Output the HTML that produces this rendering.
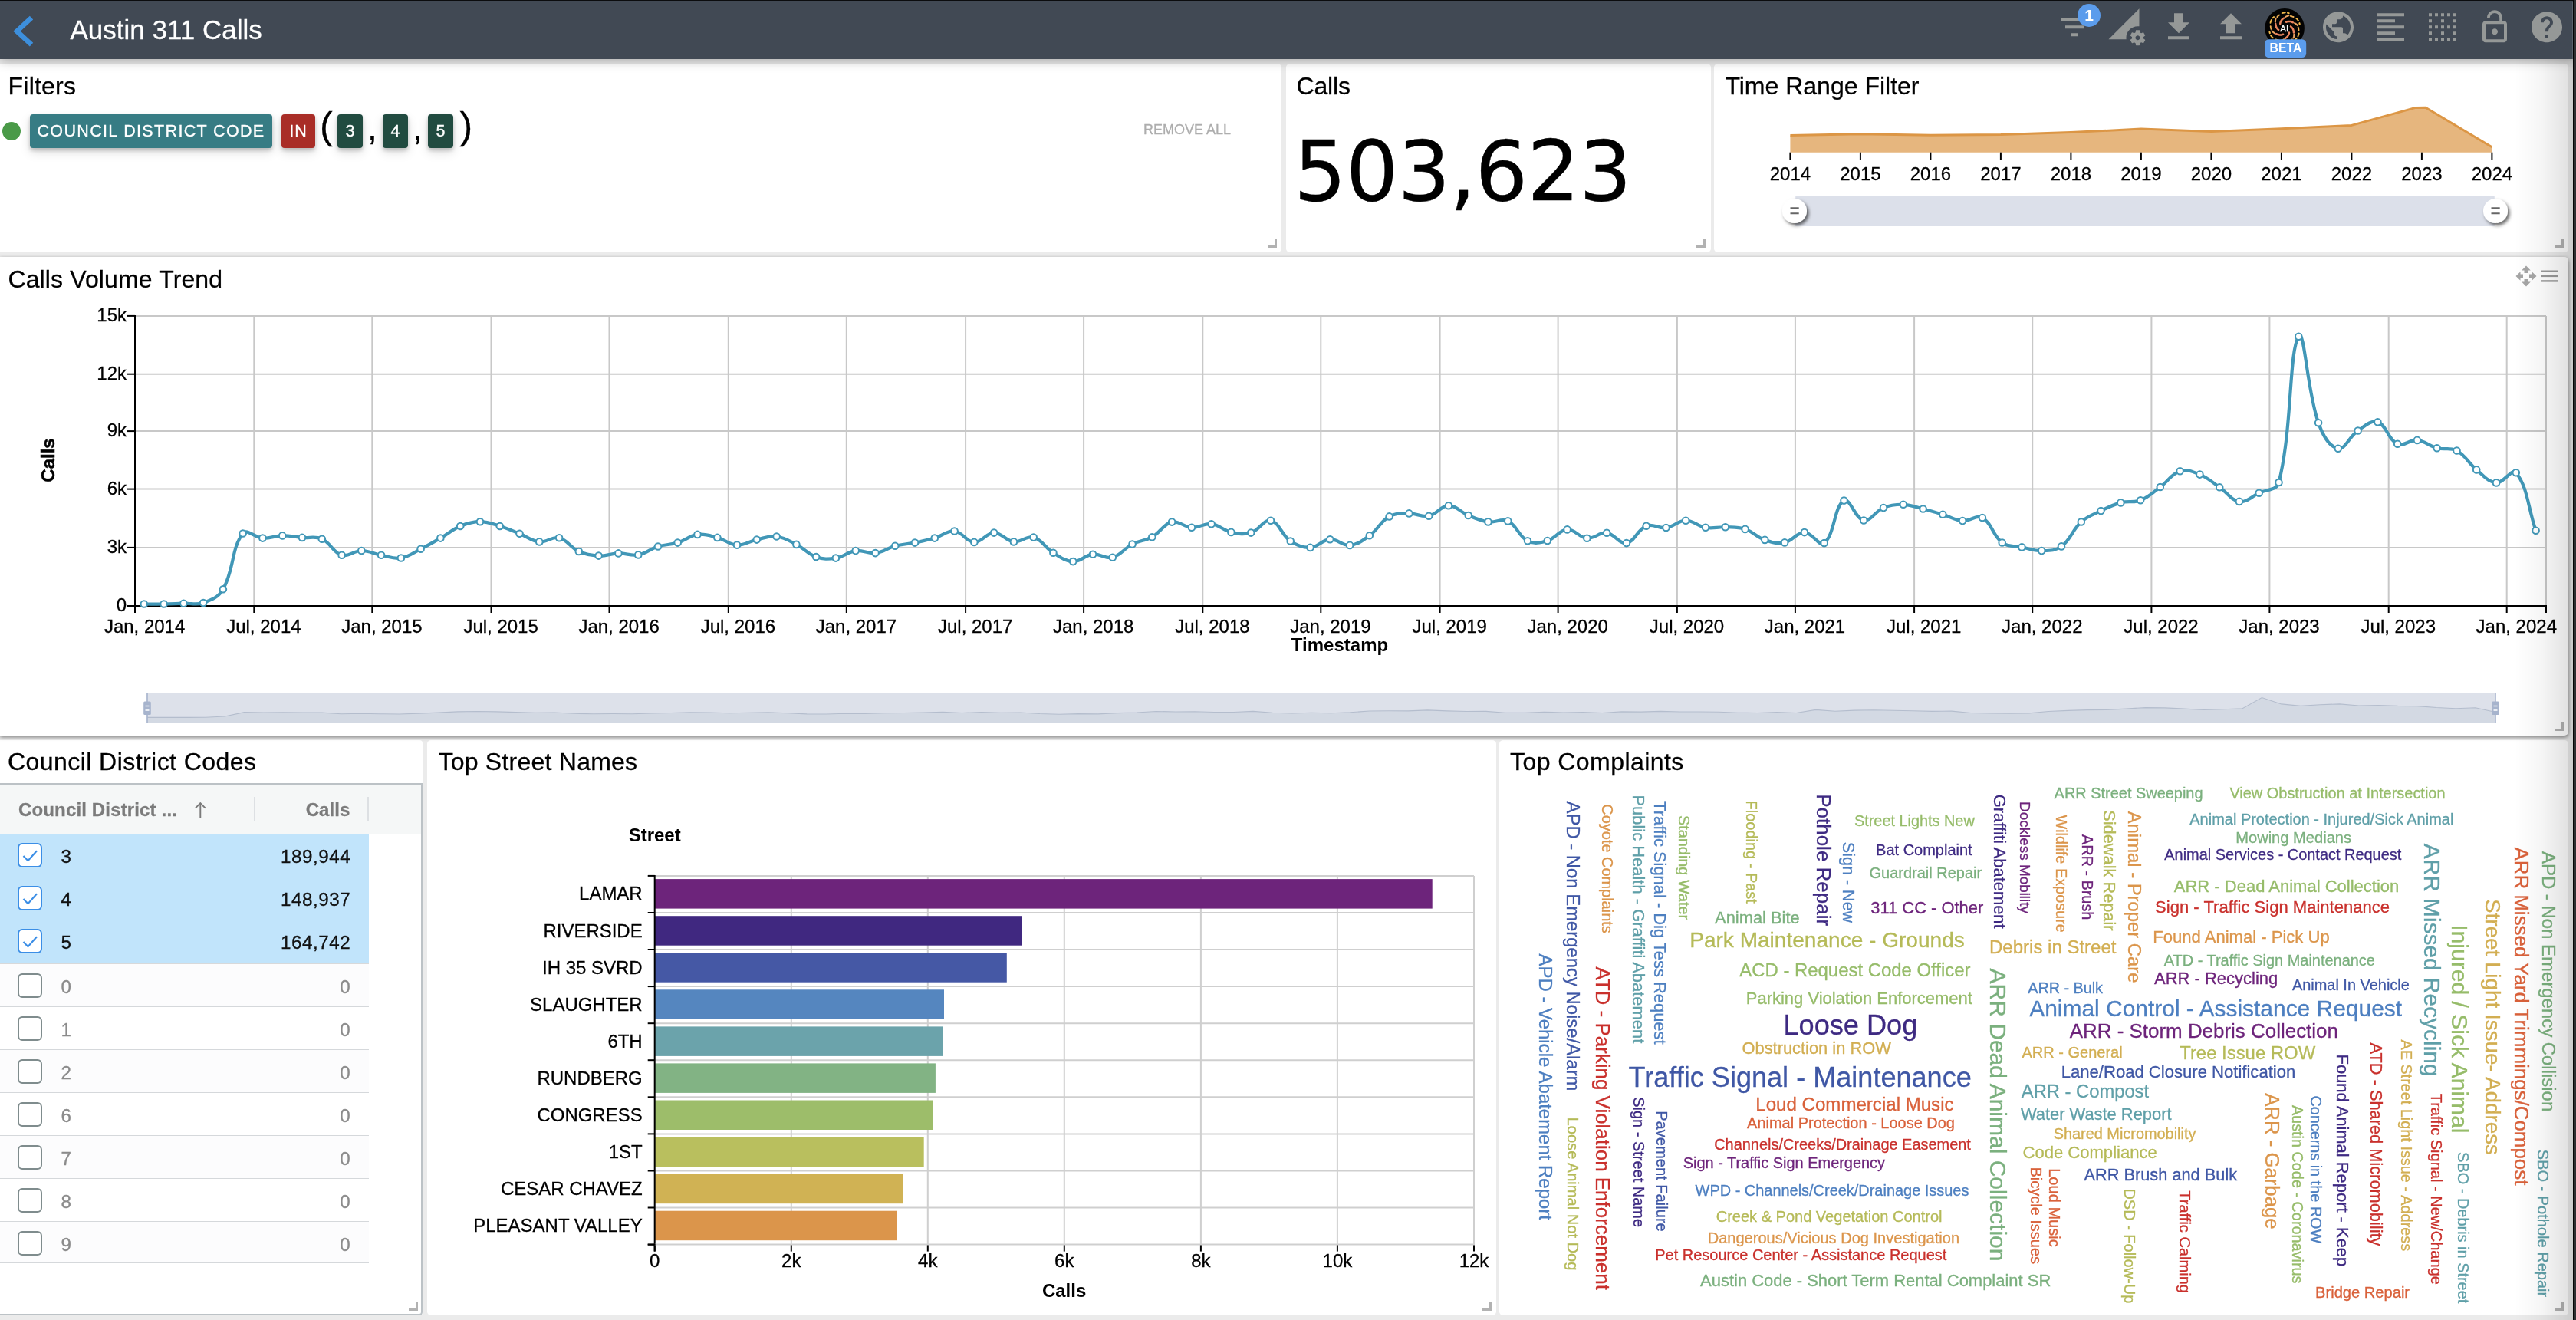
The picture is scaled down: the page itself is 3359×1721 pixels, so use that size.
<!DOCTYPE html><html><head><meta charset="utf-8"><title>Austin 311 Calls</title><style>
*{box-sizing:border-box;margin:0;padding:0}
html,body{width:3359px;height:1721px;overflow:hidden;background:#ebebeb;font-family:"Liberation Sans",sans-serif;}
body{position:relative;-webkit-text-stroke:.3px}
#root{position:absolute;left:0;top:0;width:3359px;height:1721px;will-change:transform}
.abs{position:absolute}
.panel{position:absolute;background:#fff;border-radius:5px;overflow:hidden}
.ptitle{position:absolute;left:12px;font-size:32px;line-height:40px;color:#000;white-space:nowrap}
.rh{position:absolute;width:12px;height:12px;border-right:3.4px solid #b2b2b2;border-bottom:3.4px solid #b2b2b2}
.chip{position:absolute;top:66px;height:44px;border-radius:4px;color:#fff;font-size:21.5px;line-height:44px;text-align:center;box-shadow:0 3px 5px rgba(0,0,0,.2),0 6px 14px rgba(0,0,0,.13);white-space:nowrap}
svg{position:absolute;left:0;top:0;overflow:visible}
svg text{font-family:"Liberation Sans",sans-serif}
</style></head><body><div id="root">
<div class="abs" style="left:0;top:0;width:3359px;height:77px;background:#414954;box-shadow:0 2px 14px rgba(0,0,0,.3);z-index:5"></div>
<div class="abs" style="left:0;top:0;width:3359px;height:1.3px;background:#0b0c0e;z-index:6"></div>
<svg class="abs" style="left:0;top:0;z-index:7" width="3359" height="80" viewBox="0 0 3359 80"><path d="M41 23.2 L22 40.700 L41 58.2" fill="none" stroke="#3d8fdc" stroke-width="6.5" stroke-linejoin="miter"/></svg>
<div class="abs" style="left:91.5px;top:17.4px;z-index:7;color:#fff;font-size:35px;line-height:44px;white-space:nowrap">Austin 311 Calls</div>
<div class="panel" style="left:0;top:83px;width:1671px;height:246px;border-radius:0 5px 5px 0">
<div class="ptitle" style="top:9px;left:10.6px;letter-spacing:.2px">Filters</div>
<div class="abs" style="left:3px;top:76px;width:24px;height:24px;border-radius:50%;background:#4a9a48"></div>
<div class="chip" style="left:39px;width:316px;background:#377c84;letter-spacing:1.35px">COUNCIL DISTRICT CODE</div>
<div class="chip" style="left:367px;width:44px;background:#a92d27;letter-spacing:1px">IN</div>
<div class="abs" style="left:417px;top:50.5px;font-size:50px;line-height:60px;color:#000">(</div>
<div class="chip" style="left:440px;width:33px;background:#214b40">3</div>
<div class="abs" style="left:479px;top:53px;font-size:46px;line-height:60px;color:#000">,</div>
<div class="chip" style="left:499px;width:33px;background:#214b40">4</div>
<div class="abs" style="left:538px;top:53px;font-size:46px;line-height:60px;color:#000">,</div>
<div class="chip" style="left:558px;width:33px;background:#214b40">5</div>
<div class="abs" style="left:599.5px;top:50.5px;font-size:50px;line-height:60px;color:#000">)</div>
<div class="abs" style="left:1491px;top:74px;font-size:18px;line-height:24px;color:#adadad;white-space:nowrap">REMOVE ALL</div>
<div class="rh" style="left:1653px;top:228px"></div>
</div>
<div class="panel" style="left:1677px;top:83px;width:554px;height:246px">
<div class="ptitle" style="top:9px;left:13.4px;letter-spacing:-.1px">Calls</div>
<div class="abs" style="left:10px;top:76px;font-family:'DejaVu Sans',sans-serif;font-size:108px;line-height:130px;color:#000;white-space:nowrap;letter-spacing:-1px">503,623</div>
<div class="rh" style="left:535px;top:228px"></div>
</div>
<div class="panel" style="left:2235px;top:83px;width:1114px;height:246px">
<div class="ptitle" style="top:9px;left:14.4px">Time Range Filter</div>
<svg width="1114" height="246" viewBox="2235 83 1114 246">
<polygon points="2334.4,198.7 2334.4,176.4 2425.9,174.7 2517.4,176.2 2608.9,175.6 2700.4,172.6 2791.9,168.1 2883.4,171.6 2974.9,167.8 3066.4,163.4 3149.9,140.4 3162.9,140.2 3249.4,191.8 3249.4,198.7" fill="#e6b67e"/>
<polyline points="2334.4,176.4 2425.9,174.7 2517.4,176.2 2608.9,175.6 2700.4,172.6 2791.9,168.1 2883.4,171.6 2974.9,167.8 3066.4,163.4 3149.9,140.4 3162.9,140.2 3249.4,191.8" fill="none" stroke="#dc9645" stroke-width="3" stroke-linejoin="round"/>
<line x1="2334.4" y1="198.7" x2="2334.4" y2="208.5" stroke="#000" stroke-width="2"/>
<text x="2334.4" y="234.7" font-size="24" text-anchor="middle" fill="#000" stroke="#000" stroke-width=".3">2014</text>
<line x1="2425.9" y1="198.7" x2="2425.9" y2="208.5" stroke="#000" stroke-width="2"/>
<text x="2425.9" y="234.7" font-size="24" text-anchor="middle" fill="#000" stroke="#000" stroke-width=".3">2015</text>
<line x1="2517.4" y1="198.7" x2="2517.4" y2="208.5" stroke="#000" stroke-width="2"/>
<text x="2517.4" y="234.7" font-size="24" text-anchor="middle" fill="#000" stroke="#000" stroke-width=".3">2016</text>
<line x1="2608.9" y1="198.7" x2="2608.9" y2="208.5" stroke="#000" stroke-width="2"/>
<text x="2608.9" y="234.7" font-size="24" text-anchor="middle" fill="#000" stroke="#000" stroke-width=".3">2017</text>
<line x1="2700.4" y1="198.7" x2="2700.4" y2="208.5" stroke="#000" stroke-width="2"/>
<text x="2700.4" y="234.7" font-size="24" text-anchor="middle" fill="#000" stroke="#000" stroke-width=".3">2018</text>
<line x1="2791.9" y1="198.7" x2="2791.9" y2="208.5" stroke="#000" stroke-width="2"/>
<text x="2791.9" y="234.7" font-size="24" text-anchor="middle" fill="#000" stroke="#000" stroke-width=".3">2019</text>
<line x1="2883.4" y1="198.7" x2="2883.4" y2="208.5" stroke="#000" stroke-width="2"/>
<text x="2883.4" y="234.7" font-size="24" text-anchor="middle" fill="#000" stroke="#000" stroke-width=".3">2020</text>
<line x1="2974.9" y1="198.7" x2="2974.9" y2="208.5" stroke="#000" stroke-width="2"/>
<text x="2974.9" y="234.7" font-size="24" text-anchor="middle" fill="#000" stroke="#000" stroke-width=".3">2021</text>
<line x1="3066.4" y1="198.7" x2="3066.4" y2="208.5" stroke="#000" stroke-width="2"/>
<text x="3066.4" y="234.7" font-size="24" text-anchor="middle" fill="#000" stroke="#000" stroke-width=".3">2022</text>
<line x1="3157.9" y1="198.7" x2="3157.9" y2="208.5" stroke="#000" stroke-width="2"/>
<text x="3157.9" y="234.7" font-size="24" text-anchor="middle" fill="#000" stroke="#000" stroke-width=".3">2023</text>
<line x1="3249.4" y1="198.7" x2="3249.4" y2="208.5" stroke="#000" stroke-width="2"/>
<text x="3249.4" y="234.7" font-size="24" text-anchor="middle" fill="#000" stroke="#000" stroke-width=".3">2024</text>
<rect x="2340" y="255" width="914" height="40" fill="#dce0ea"/>
<defs><filter id="hs" x="-50%" y="-50%" width="200%" height="200%"><feDropShadow dx="2.5" dy="3" stdDeviation="2.3" flood-color="#000" flood-opacity=".6"/></filter></defs>
<line x1="2340" y1="255" x2="2340" y2="297" stroke="#fff" stroke-width="2.5"/>
<circle cx="2340" cy="275" r="16" fill="#fff" filter="url(#hs)"/>
<path d="M2334.5 271.3h11.200M2334.5 278.3h11.200" stroke="#666" stroke-width="2"/>
<line x1="3254" y1="255" x2="3254" y2="297" stroke="#fff" stroke-width="2.5"/>
<circle cx="3254" cy="275" r="16" fill="#fff" filter="url(#hs)"/>
<path d="M3248.5 271.3h11.200M3248.5 278.3h11.200" stroke="#666" stroke-width="2"/>
</svg>
<div class="rh" style="left:1096px;top:228px"></div>
</div>
<div class="panel" style="left:0px;top:335px;width:3349px;height:624px;overflow:visible;border-radius:0 5px 5px 0;box-shadow:0 2px 5px rgba(0,0,0,.5);z-index:2">
<div class="ptitle" style="top:9.2px;left:10.4px;letter-spacing:.13px">Calls Volume Trend</div>
<svg width="3349" height="624" viewBox="0 335 3349 624">
<line x1="166.0" y1="790.0" x2="176.0" y2="790.0" stroke="#000" stroke-width="2"/>
<text x="165.0" y="797.0" font-size="24" text-anchor="end" fill="#000" stroke="#000" stroke-width=".3">0</text>
<line x1="176.0" y1="713.9" x2="3320.0" y2="713.9" stroke="#c8c8c8" stroke-width="2"/>
<line x1="166.0" y1="713.9" x2="176.0" y2="713.9" stroke="#000" stroke-width="2"/>
<text x="165.0" y="720.9" font-size="24" text-anchor="end" fill="#000" stroke="#000" stroke-width=".3">3k</text>
<line x1="176.0" y1="637.6" x2="3320.0" y2="637.6" stroke="#c8c8c8" stroke-width="2"/>
<line x1="166.0" y1="637.6" x2="176.0" y2="637.6" stroke="#000" stroke-width="2"/>
<text x="165.0" y="644.6" font-size="24" text-anchor="end" fill="#000" stroke="#000" stroke-width=".3">6k</text>
<line x1="176.0" y1="562.1" x2="3320.0" y2="562.1" stroke="#c8c8c8" stroke-width="2"/>
<line x1="166.0" y1="562.1" x2="176.0" y2="562.1" stroke="#000" stroke-width="2"/>
<text x="165.0" y="569.1" font-size="24" text-anchor="end" fill="#000" stroke="#000" stroke-width=".3">9k</text>
<line x1="176.0" y1="487.7" x2="3320.0" y2="487.7" stroke="#c8c8c8" stroke-width="2"/>
<line x1="166.0" y1="487.7" x2="176.0" y2="487.7" stroke="#000" stroke-width="2"/>
<text x="165.0" y="494.7" font-size="24" text-anchor="end" fill="#000" stroke="#000" stroke-width=".3">12k</text>
<line x1="176.0" y1="411.9" x2="3320.0" y2="411.9" stroke="#c8c8c8" stroke-width="2"/>
<line x1="166.0" y1="411.9" x2="176.0" y2="411.9" stroke="#000" stroke-width="2"/>
<text x="165.0" y="418.9" font-size="24" text-anchor="end" fill="#000" stroke="#000" stroke-width=".3">15k</text>
<line x1="176.0" y1="790.0" x2="176.0" y2="799.0" stroke="#000" stroke-width="2"/>
<text x="188.6" y="825" font-size="24" text-anchor="middle" fill="#000" stroke="#000" stroke-width=".3">Jan, 2014</text>
<line x1="331.3" y1="412.0" x2="331.3" y2="790.0" stroke="#c8c8c8" stroke-width="2"/>
<line x1="331.3" y1="790.0" x2="331.3" y2="799.0" stroke="#000" stroke-width="2"/>
<text x="343.9" y="825" font-size="24" text-anchor="middle" fill="#000" stroke="#000" stroke-width=".3">Jul, 2014</text>
<line x1="485.3" y1="412.0" x2="485.3" y2="790.0" stroke="#c8c8c8" stroke-width="2"/>
<line x1="485.3" y1="790.0" x2="485.3" y2="799.0" stroke="#000" stroke-width="2"/>
<text x="497.9" y="825" font-size="24" text-anchor="middle" fill="#000" stroke="#000" stroke-width=".3">Jan, 2015</text>
<line x1="640.5" y1="412.0" x2="640.5" y2="790.0" stroke="#c8c8c8" stroke-width="2"/>
<line x1="640.5" y1="790.0" x2="640.5" y2="799.0" stroke="#000" stroke-width="2"/>
<text x="653.1" y="825" font-size="24" text-anchor="middle" fill="#000" stroke="#000" stroke-width=".3">Jul, 2015</text>
<line x1="794.5" y1="412.0" x2="794.5" y2="790.0" stroke="#c8c8c8" stroke-width="2"/>
<line x1="794.5" y1="790.0" x2="794.5" y2="799.0" stroke="#000" stroke-width="2"/>
<text x="807.1" y="825" font-size="24" text-anchor="middle" fill="#000" stroke="#000" stroke-width=".3">Jan, 2016</text>
<line x1="949.8" y1="412.0" x2="949.8" y2="790.0" stroke="#c8c8c8" stroke-width="2"/>
<line x1="949.8" y1="790.0" x2="949.8" y2="799.0" stroke="#000" stroke-width="2"/>
<text x="962.4" y="825" font-size="24" text-anchor="middle" fill="#000" stroke="#000" stroke-width=".3">Jul, 2016</text>
<line x1="1103.8" y1="412.0" x2="1103.8" y2="790.0" stroke="#c8c8c8" stroke-width="2"/>
<line x1="1103.8" y1="790.0" x2="1103.8" y2="799.0" stroke="#000" stroke-width="2"/>
<text x="1116.4" y="825" font-size="24" text-anchor="middle" fill="#000" stroke="#000" stroke-width=".3">Jan, 2017</text>
<line x1="1259.1" y1="412.0" x2="1259.1" y2="790.0" stroke="#c8c8c8" stroke-width="2"/>
<line x1="1259.1" y1="790.0" x2="1259.1" y2="799.0" stroke="#000" stroke-width="2"/>
<text x="1271.7" y="825" font-size="24" text-anchor="middle" fill="#000" stroke="#000" stroke-width=".3">Jul, 2017</text>
<line x1="1413.1" y1="412.0" x2="1413.1" y2="790.0" stroke="#c8c8c8" stroke-width="2"/>
<line x1="1413.1" y1="790.0" x2="1413.1" y2="799.0" stroke="#000" stroke-width="2"/>
<text x="1425.7" y="825" font-size="24" text-anchor="middle" fill="#000" stroke="#000" stroke-width=".3">Jan, 2018</text>
<line x1="1568.3" y1="412.0" x2="1568.3" y2="790.0" stroke="#c8c8c8" stroke-width="2"/>
<line x1="1568.3" y1="790.0" x2="1568.3" y2="799.0" stroke="#000" stroke-width="2"/>
<text x="1580.9" y="825" font-size="24" text-anchor="middle" fill="#000" stroke="#000" stroke-width=".3">Jul, 2018</text>
<line x1="1722.3" y1="412.0" x2="1722.3" y2="790.0" stroke="#c8c8c8" stroke-width="2"/>
<line x1="1722.3" y1="790.0" x2="1722.3" y2="799.0" stroke="#000" stroke-width="2"/>
<text x="1734.9" y="825" font-size="24" text-anchor="middle" fill="#000" stroke="#000" stroke-width=".3">Jan, 2019</text>
<line x1="1877.6" y1="412.0" x2="1877.6" y2="790.0" stroke="#c8c8c8" stroke-width="2"/>
<line x1="1877.6" y1="790.0" x2="1877.6" y2="799.0" stroke="#000" stroke-width="2"/>
<text x="1890.2" y="825" font-size="24" text-anchor="middle" fill="#000" stroke="#000" stroke-width=".3">Jul, 2019</text>
<line x1="2031.6" y1="412.0" x2="2031.6" y2="790.0" stroke="#c8c8c8" stroke-width="2"/>
<line x1="2031.6" y1="790.0" x2="2031.6" y2="799.0" stroke="#000" stroke-width="2"/>
<text x="2044.2" y="825" font-size="24" text-anchor="middle" fill="#000" stroke="#000" stroke-width=".3">Jan, 2020</text>
<line x1="2186.9" y1="412.0" x2="2186.9" y2="790.0" stroke="#c8c8c8" stroke-width="2"/>
<line x1="2186.9" y1="790.0" x2="2186.9" y2="799.0" stroke="#000" stroke-width="2"/>
<text x="2199.5" y="825" font-size="24" text-anchor="middle" fill="#000" stroke="#000" stroke-width=".3">Jul, 2020</text>
<line x1="2340.9" y1="412.0" x2="2340.9" y2="790.0" stroke="#c8c8c8" stroke-width="2"/>
<line x1="2340.9" y1="790.0" x2="2340.9" y2="799.0" stroke="#000" stroke-width="2"/>
<text x="2353.5" y="825" font-size="24" text-anchor="middle" fill="#000" stroke="#000" stroke-width=".3">Jan, 2021</text>
<line x1="2496.1" y1="412.0" x2="2496.1" y2="790.0" stroke="#c8c8c8" stroke-width="2"/>
<line x1="2496.1" y1="790.0" x2="2496.1" y2="799.0" stroke="#000" stroke-width="2"/>
<text x="2508.7" y="825" font-size="24" text-anchor="middle" fill="#000" stroke="#000" stroke-width=".3">Jul, 2021</text>
<line x1="2650.2" y1="412.0" x2="2650.2" y2="790.0" stroke="#c8c8c8" stroke-width="2"/>
<line x1="2650.2" y1="790.0" x2="2650.2" y2="799.0" stroke="#000" stroke-width="2"/>
<text x="2662.8" y="825" font-size="24" text-anchor="middle" fill="#000" stroke="#000" stroke-width=".3">Jan, 2022</text>
<line x1="2805.4" y1="412.0" x2="2805.4" y2="790.0" stroke="#c8c8c8" stroke-width="2"/>
<line x1="2805.4" y1="790.0" x2="2805.4" y2="799.0" stroke="#000" stroke-width="2"/>
<text x="2818.0" y="825" font-size="24" text-anchor="middle" fill="#000" stroke="#000" stroke-width=".3">Jul, 2022</text>
<line x1="2959.4" y1="412.0" x2="2959.4" y2="790.0" stroke="#c8c8c8" stroke-width="2"/>
<line x1="2959.4" y1="790.0" x2="2959.4" y2="799.0" stroke="#000" stroke-width="2"/>
<text x="2972.0" y="825" font-size="24" text-anchor="middle" fill="#000" stroke="#000" stroke-width=".3">Jan, 2023</text>
<line x1="3114.7" y1="412.0" x2="3114.7" y2="790.0" stroke="#c8c8c8" stroke-width="2"/>
<line x1="3114.7" y1="790.0" x2="3114.7" y2="799.0" stroke="#000" stroke-width="2"/>
<text x="3127.3" y="825" font-size="24" text-anchor="middle" fill="#000" stroke="#000" stroke-width=".3">Jul, 2023</text>
<line x1="3268.7" y1="412.0" x2="3268.7" y2="790.0" stroke="#c8c8c8" stroke-width="2"/>
<line x1="3268.7" y1="790.0" x2="3268.7" y2="799.0" stroke="#000" stroke-width="2"/>
<text x="3281.3" y="825" font-size="24" text-anchor="middle" fill="#000" stroke="#000" stroke-width=".3">Jan, 2024</text>
<line x1="3320.0" y1="412.0" x2="3320.0" y2="790.0" stroke="#c8c8c8" stroke-width="2"/>
<line x1="3320.0" y1="790.0" x2="3320.0" y2="799.0" stroke="#000" stroke-width="2"/>
<line x1="176.0" y1="411.0" x2="176.0" y2="799.0" stroke="#000" stroke-width="2"/>
<line x1="167.0" y1="790.0" x2="3321.0" y2="790.0" stroke="#000" stroke-width="2"/>
<text transform="translate(71.3,600) rotate(-90)" font-size="24" font-weight="bold" text-anchor="middle" fill="#000" stroke="#000" stroke-width=".5">Calls</text>
<text x="1747" y="849" font-size="24" font-weight="bold" text-anchor="middle" fill="#000">Timestamp</text>
<path d="M187.8,787.5C198.1,787.5 203.3,787.7 213.6,787.5C223.9,787.3 229.0,787.0 239.4,786.7C249.7,786.4 255.8,789.3 265.1,786.0C276.4,781.9 284.9,778.7 290.9,768.2C305.6,742.5 301.3,715.3 316.7,695.5C321.9,688.7 332.0,701.0 342.4,701.6C352.7,702.2 357.9,698.5 368.2,698.4C378.5,698.3 383.7,700.0 394.0,700.9C404.3,701.8 410.8,698.7 419.8,702.7C431.4,707.9 434.1,720.4 445.6,723.8C454.7,726.5 461.0,718.0 471.3,718.0C481.6,718.0 486.7,721.9 497.1,723.8C507.3,725.7 513.0,729.0 522.9,727.5C533.6,725.8 538.5,720.9 548.6,715.8C559.2,710.5 564.2,707.5 574.4,701.6C584.9,695.6 589.2,690.6 600.2,686.0C609.8,682.0 615.7,680.2 626.0,680.2C636.3,680.2 641.7,682.9 651.8,686.0C662.3,689.2 667.3,691.7 677.5,695.8C687.9,699.9 692.7,705.3 703.3,706.4C713.3,707.5 719.7,699.0 729.1,701.3C740.3,704.0 743.7,713.9 754.8,719.0C764.3,723.3 770.2,724.1 780.6,724.6C790.9,725.1 796.1,721.6 806.4,721.4C816.7,721.2 822.3,725.1 832.2,723.4C842.9,721.5 847.3,715.8 858.0,712.5C867.9,709.4 873.7,710.6 883.7,707.6C894.4,704.4 898.8,698.3 909.5,696.9C919.5,695.6 925.2,698.2 935.3,700.9C945.9,703.7 950.6,710.1 961.0,710.6C971.2,711.1 976.4,705.8 986.8,703.6C997.0,701.4 1002.6,698.3 1012.6,699.5C1023.2,700.8 1028.5,704.8 1038.4,709.9C1049.1,715.4 1053.0,722.2 1064.1,726.0C1073.6,729.3 1079.9,729.1 1089.9,727.6C1100.6,726.0 1105.1,719.4 1115.7,718.1C1125.7,716.8 1131.4,722.3 1141.5,721.1C1152.1,719.8 1156.7,714.6 1167.2,711.8C1177.3,709.2 1182.8,709.6 1193.0,707.6C1203.4,705.5 1208.7,704.6 1218.8,701.6C1229.3,698.5 1234.7,691.5 1244.6,692.5C1255.3,693.6 1259.9,706.5 1270.3,706.9C1280.5,707.3 1285.8,694.7 1296.1,694.6C1306.4,694.5 1311.2,705.2 1321.9,706.4C1331.8,707.6 1338.5,698.0 1347.7,700.6C1359.1,703.8 1362.4,713.9 1373.4,720.7C1383.0,726.5 1388.8,731.7 1399.2,732.1C1409.4,732.5 1414.4,723.8 1425.0,722.7C1435.0,721.6 1441.4,729.1 1450.8,726.7C1462.0,723.8 1465.6,715.1 1476.5,709.5C1486.2,704.5 1492.9,705.5 1502.3,700.2C1513.5,693.9 1516.8,683.3 1528.1,680.6C1537.4,678.4 1543.5,687.3 1553.9,687.8C1564.1,688.3 1569.7,682.0 1579.6,683.2C1590.3,684.5 1594.7,691.5 1605.4,693.9C1615.3,696.1 1621.7,697.4 1631.2,694.6C1642.3,691.3 1647.7,676.7 1657.0,678.7C1668.3,681.1 1670.8,697.4 1682.7,705.5C1691.4,711.4 1698.4,714.4 1708.5,713.9C1719.0,713.4 1723.8,703.8 1734.3,703.2C1744.4,702.6 1750.1,711.8 1760.1,710.9C1770.7,709.9 1776.7,705.0 1785.8,698.3C1797.3,690.0 1799.7,680.1 1811.6,673.4C1820.3,668.5 1827.1,669.5 1837.4,669.4C1847.7,669.3 1853.4,674.6 1863.2,672.7C1874.1,670.5 1878.6,659.3 1888.9,659.2C1899.2,659.1 1904.1,667.6 1914.7,672.0C1924.7,676.1 1929.9,678.9 1940.5,680.4C1950.6,681.8 1957.7,675.3 1966.3,679.4C1978.4,685.2 1980.0,699.3 1992.0,705.3C2000.6,709.5 2008.2,707.8 2017.8,705.0C2028.9,701.8 2033.0,691.1 2043.6,690.4C2053.7,689.8 2058.8,700.9 2069.4,701.8C2079.4,702.7 2085.3,693.6 2095.2,694.8C2105.9,696.1 2111.5,709.8 2120.9,708.1C2132.1,706.1 2135.0,690.3 2146.7,685.7C2155.6,682.2 2162.5,689.4 2172.5,688.0C2183.1,686.6 2187.9,678.7 2198.2,678.7C2208.5,678.7 2213.4,686.0 2224.0,687.8C2234.0,689.5 2239.5,686.9 2249.8,687.3C2260.1,687.7 2265.9,686.8 2275.6,689.9C2286.5,693.4 2290.4,700.2 2301.3,703.9C2311.0,707.2 2317.4,709.3 2327.1,707.4C2338.0,705.3 2342.6,694.0 2352.9,694.1C2363.3,694.2 2372.0,713.5 2378.7,708.1C2392.6,696.9 2391.5,660.0 2404.5,652.6C2412.2,648.2 2419.0,676.4 2430.2,678.5C2439.6,680.2 2444.9,666.6 2456.0,662.1C2465.5,658.3 2471.5,657.5 2481.8,657.8C2492.1,658.1 2497.3,660.9 2507.6,663.5C2517.9,666.1 2523.1,667.7 2533.3,670.8C2543.7,673.9 2548.6,678.2 2559.1,679.1C2569.2,679.9 2576.9,670.6 2584.9,675.0C2597.5,682.0 2598.1,698.1 2610.7,707.5C2618.7,713.5 2626.1,711.3 2636.4,713.4C2646.7,715.5 2651.9,718.3 2662.2,718.1C2672.5,717.9 2679.9,718.3 2688.0,712.4C2700.5,703.2 2701.8,691.3 2713.8,680.5C2722.4,672.7 2728.9,671.3 2739.5,666.1C2749.5,661.2 2754.6,658.3 2765.3,655.4C2775.2,652.7 2781.7,656.0 2791.1,652.3C2802.3,647.9 2806.9,642.4 2816.8,635.0C2827.5,627.2 2831.1,618.0 2842.6,614.3C2851.7,611.4 2858.9,614.8 2868.4,618.6C2879.5,623.1 2884.1,628.3 2894.2,635.2C2904.7,642.4 2909.0,652.3 2919.9,653.9C2929.6,655.3 2935.6,647.6 2945.7,642.7C2956.2,637.6 2968.8,639.8 2971.5,629.0C2989.4,558.2 2984.4,458.2 2997.3,438.8C3005.0,427.1 3008.0,508.5 3023.1,551.2C3028.6,566.9 3037.5,582.5 3048.8,584.8C3058.1,586.7 3063.2,569.1 3074.6,561.5C3083.8,555.3 3091.7,547.4 3100.4,550.3C3112.3,554.3 3113.9,573.2 3126.2,578.8C3134.5,582.6 3141.9,572.9 3151.9,573.9C3162.5,575.0 3167.1,581.4 3177.7,584.2C3187.7,586.8 3194.8,582.8 3203.5,587.5C3215.4,594.0 3218.2,603.4 3229.2,612.4C3238.8,620.2 3244.4,628.6 3255.0,629.4C3265.0,630.2 3275.3,609.7 3280.8,616.3C3295.9,634.6 3296.3,661.6 3306.6,691.8" fill="none" stroke="#4197b7" stroke-width="4.2" stroke-linecap="round" stroke-linejoin="round"/>
<g fill="#fff" stroke="#4197b7" stroke-width="2">
<circle cx="187.8" cy="787.5" r="4.3"/>
<circle cx="213.6" cy="787.5" r="4.3"/>
<circle cx="239.4" cy="786.7" r="4.3"/>
<circle cx="265.1" cy="786.0" r="4.3"/>
<circle cx="290.9" cy="768.2" r="4.3"/>
<circle cx="316.7" cy="695.5" r="4.3"/>
<circle cx="342.4" cy="701.6" r="4.3"/>
<circle cx="368.2" cy="698.4" r="4.3"/>
<circle cx="394.0" cy="700.9" r="4.3"/>
<circle cx="419.8" cy="702.7" r="4.3"/>
<circle cx="445.6" cy="723.8" r="4.3"/>
<circle cx="471.3" cy="718.0" r="4.3"/>
<circle cx="497.1" cy="723.8" r="4.3"/>
<circle cx="522.9" cy="727.5" r="4.3"/>
<circle cx="548.6" cy="715.8" r="4.3"/>
<circle cx="574.4" cy="701.6" r="4.3"/>
<circle cx="600.2" cy="686.0" r="4.3"/>
<circle cx="626.0" cy="680.2" r="4.3"/>
<circle cx="651.8" cy="686.0" r="4.3"/>
<circle cx="677.5" cy="695.8" r="4.3"/>
<circle cx="703.3" cy="706.4" r="4.3"/>
<circle cx="729.1" cy="701.3" r="4.3"/>
<circle cx="754.8" cy="719.0" r="4.3"/>
<circle cx="780.6" cy="724.6" r="4.3"/>
<circle cx="806.4" cy="721.4" r="4.3"/>
<circle cx="832.2" cy="723.4" r="4.3"/>
<circle cx="858.0" cy="712.5" r="4.3"/>
<circle cx="883.7" cy="707.6" r="4.3"/>
<circle cx="909.5" cy="696.9" r="4.3"/>
<circle cx="935.3" cy="700.9" r="4.3"/>
<circle cx="961.0" cy="710.6" r="4.3"/>
<circle cx="986.8" cy="703.6" r="4.3"/>
<circle cx="1012.6" cy="699.5" r="4.3"/>
<circle cx="1038.4" cy="709.9" r="4.3"/>
<circle cx="1064.1" cy="726.0" r="4.3"/>
<circle cx="1089.9" cy="727.6" r="4.3"/>
<circle cx="1115.7" cy="718.1" r="4.3"/>
<circle cx="1141.5" cy="721.1" r="4.3"/>
<circle cx="1167.2" cy="711.8" r="4.3"/>
<circle cx="1193.0" cy="707.6" r="4.3"/>
<circle cx="1218.8" cy="701.6" r="4.3"/>
<circle cx="1244.6" cy="692.5" r="4.3"/>
<circle cx="1270.3" cy="706.9" r="4.3"/>
<circle cx="1296.1" cy="694.6" r="4.3"/>
<circle cx="1321.9" cy="706.4" r="4.3"/>
<circle cx="1347.7" cy="700.6" r="4.3"/>
<circle cx="1373.4" cy="720.7" r="4.3"/>
<circle cx="1399.2" cy="732.1" r="4.3"/>
<circle cx="1425.0" cy="722.7" r="4.3"/>
<circle cx="1450.8" cy="726.7" r="4.3"/>
<circle cx="1476.5" cy="709.5" r="4.3"/>
<circle cx="1502.3" cy="700.2" r="4.3"/>
<circle cx="1528.1" cy="680.6" r="4.3"/>
<circle cx="1553.9" cy="687.8" r="4.3"/>
<circle cx="1579.6" cy="683.2" r="4.3"/>
<circle cx="1605.4" cy="693.9" r="4.3"/>
<circle cx="1631.2" cy="694.6" r="4.3"/>
<circle cx="1657.0" cy="678.7" r="4.3"/>
<circle cx="1682.7" cy="705.5" r="4.3"/>
<circle cx="1708.5" cy="713.9" r="4.3"/>
<circle cx="1734.3" cy="703.2" r="4.3"/>
<circle cx="1760.1" cy="710.9" r="4.3"/>
<circle cx="1785.8" cy="698.3" r="4.3"/>
<circle cx="1811.6" cy="673.4" r="4.3"/>
<circle cx="1837.4" cy="669.4" r="4.3"/>
<circle cx="1863.2" cy="672.7" r="4.3"/>
<circle cx="1888.9" cy="659.2" r="4.3"/>
<circle cx="1914.7" cy="672.0" r="4.3"/>
<circle cx="1940.5" cy="680.4" r="4.3"/>
<circle cx="1966.3" cy="679.4" r="4.3"/>
<circle cx="1992.0" cy="705.3" r="4.3"/>
<circle cx="2017.8" cy="705.0" r="4.3"/>
<circle cx="2043.6" cy="690.4" r="4.3"/>
<circle cx="2069.4" cy="701.8" r="4.3"/>
<circle cx="2095.2" cy="694.8" r="4.3"/>
<circle cx="2120.9" cy="708.1" r="4.3"/>
<circle cx="2146.7" cy="685.7" r="4.3"/>
<circle cx="2172.5" cy="688.0" r="4.3"/>
<circle cx="2198.2" cy="678.7" r="4.3"/>
<circle cx="2224.0" cy="687.8" r="4.3"/>
<circle cx="2249.8" cy="687.3" r="4.3"/>
<circle cx="2275.6" cy="689.9" r="4.3"/>
<circle cx="2301.3" cy="703.9" r="4.3"/>
<circle cx="2327.1" cy="707.4" r="4.3"/>
<circle cx="2352.9" cy="694.1" r="4.3"/>
<circle cx="2378.7" cy="708.1" r="4.3"/>
<circle cx="2404.5" cy="652.6" r="4.3"/>
<circle cx="2430.2" cy="678.5" r="4.3"/>
<circle cx="2456.0" cy="662.1" r="4.3"/>
<circle cx="2481.8" cy="657.8" r="4.3"/>
<circle cx="2507.6" cy="663.5" r="4.3"/>
<circle cx="2533.3" cy="670.8" r="4.3"/>
<circle cx="2559.1" cy="679.1" r="4.3"/>
<circle cx="2584.9" cy="675.0" r="4.3"/>
<circle cx="2610.7" cy="707.5" r="4.3"/>
<circle cx="2636.4" cy="713.4" r="4.3"/>
<circle cx="2662.2" cy="718.1" r="4.3"/>
<circle cx="2688.0" cy="712.4" r="4.3"/>
<circle cx="2713.8" cy="680.5" r="4.3"/>
<circle cx="2739.5" cy="666.1" r="4.3"/>
<circle cx="2765.3" cy="655.4" r="4.3"/>
<circle cx="2791.1" cy="652.3" r="4.3"/>
<circle cx="2816.8" cy="635.0" r="4.3"/>
<circle cx="2842.6" cy="614.3" r="4.3"/>
<circle cx="2868.4" cy="618.6" r="4.3"/>
<circle cx="2894.2" cy="635.2" r="4.3"/>
<circle cx="2919.9" cy="653.9" r="4.3"/>
<circle cx="2945.7" cy="642.7" r="4.3"/>
<circle cx="2971.5" cy="629.0" r="4.3"/>
<circle cx="2997.3" cy="438.8" r="4.3"/>
<circle cx="3023.1" cy="551.2" r="4.3"/>
<circle cx="3048.8" cy="584.8" r="4.3"/>
<circle cx="3074.6" cy="561.5" r="4.3"/>
<circle cx="3100.4" cy="550.3" r="4.3"/>
<circle cx="3126.2" cy="578.8" r="4.3"/>
<circle cx="3151.9" cy="573.9" r="4.3"/>
<circle cx="3177.7" cy="584.2" r="4.3"/>
<circle cx="3203.5" cy="587.5" r="4.3"/>
<circle cx="3229.2" cy="612.4" r="4.3"/>
<circle cx="3255.0" cy="629.4" r="4.3"/>
<circle cx="3280.8" cy="616.3" r="4.3"/>
<circle cx="3306.6" cy="691.8" r="4.3"/>
</g>
<rect x="191.5" y="903.2" width="3062.5" height="39.5" fill="#dde1ea"/>
<path d="M192.0,935.4 L217.3,935.4 L242.6,935.4 L267.9,935.3 L293.2,934.0 L318.5,928.6 L343.8,929.1 L369.1,928.8 L394.4,929.0 L419.7,929.1 L445.0,930.7 L470.3,930.3 L495.6,930.7 L520.9,931.0 L546.2,930.1 L571.5,929.1 L596.8,927.9 L622.1,927.5 L647.4,927.9 L672.7,928.6 L698.0,929.4 L723.2,929.0 L748.5,930.3 L773.8,930.8 L799.1,930.5 L824.4,930.7 L849.7,929.9 L875.0,929.5 L900.3,928.7 L925.6,929.0 L950.9,929.7 L976.2,929.2 L1001.5,928.9 L1026.8,929.7 L1052.1,930.9 L1077.4,931.0 L1102.7,930.3 L1128.0,930.5 L1153.3,929.8 L1178.6,929.5 L1203.9,929.1 L1229.2,928.4 L1254.5,929.5 L1279.8,928.5 L1305.1,929.4 L1330.4,929.0 L1355.7,930.5 L1381.0,931.3 L1406.3,930.6 L1431.6,930.9 L1456.9,929.6 L1482.2,929.0 L1507.5,927.5 L1532.8,928.0 L1558.1,927.7 L1583.4,928.5 L1608.7,928.5 L1634.0,927.4 L1659.3,929.3 L1684.6,930.0 L1709.9,929.2 L1735.1,929.7 L1760.4,928.8 L1785.7,927.0 L1811.0,926.7 L1836.3,926.9 L1861.6,925.9 L1886.9,926.9 L1912.2,927.5 L1937.5,927.4 L1962.8,929.3 L1988.1,929.3 L2013.4,928.2 L2038.7,929.1 L2064.0,928.6 L2089.3,929.5 L2114.6,927.9 L2139.9,928.1 L2165.2,927.4 L2190.5,928.0 L2215.8,928.0 L2241.1,928.2 L2266.4,929.2 L2291.7,929.5 L2317.0,928.5 L2342.3,929.5 L2367.6,925.4 L2392.9,927.3 L2418.2,926.1 L2443.5,925.8 L2468.8,926.2 L2494.1,926.8 L2519.4,927.4 L2544.7,927.1 L2570.0,929.5 L2595.3,929.9 L2620.6,930.3 L2645.9,929.9 L2671.2,927.5 L2696.5,926.4 L2721.8,925.6 L2747.0,925.4 L2772.3,924.1 L2797.6,922.6 L2822.9,922.9 L2848.2,924.1 L2873.5,925.5 L2898.8,924.7 L2924.1,923.7 L2949.4,909.6 L2974.7,917.9 L3000.0,920.4 L3025.3,918.7 L3050.6,917.9 L3075.9,920.0 L3101.2,919.6 L3126.5,920.4 L3151.8,920.6 L3177.1,922.5 L3202.4,923.7 L3227.7,922.7 L3253.0,928.3 L3253,942.7 L192,942.7Z" fill="#d3d9e3"/>
<path d="M192.0,935.4 L217.3,935.4 L242.6,935.4 L267.9,935.3 L293.2,934.0 L318.5,928.6 L343.8,929.1 L369.1,928.8 L394.4,929.0 L419.7,929.1 L445.0,930.7 L470.3,930.3 L495.6,930.7 L520.9,931.0 L546.2,930.1 L571.5,929.1 L596.8,927.9 L622.1,927.5 L647.4,927.9 L672.7,928.6 L698.0,929.4 L723.2,929.0 L748.5,930.3 L773.8,930.8 L799.1,930.5 L824.4,930.7 L849.7,929.9 L875.0,929.5 L900.3,928.7 L925.6,929.0 L950.9,929.7 L976.2,929.2 L1001.5,928.9 L1026.8,929.7 L1052.1,930.9 L1077.4,931.0 L1102.7,930.3 L1128.0,930.5 L1153.3,929.8 L1178.6,929.5 L1203.9,929.1 L1229.2,928.4 L1254.5,929.5 L1279.8,928.5 L1305.1,929.4 L1330.4,929.0 L1355.7,930.5 L1381.0,931.3 L1406.3,930.6 L1431.6,930.9 L1456.9,929.6 L1482.2,929.0 L1507.5,927.5 L1532.8,928.0 L1558.1,927.7 L1583.4,928.5 L1608.7,928.5 L1634.0,927.4 L1659.3,929.3 L1684.6,930.0 L1709.9,929.2 L1735.1,929.7 L1760.4,928.8 L1785.7,927.0 L1811.0,926.7 L1836.3,926.9 L1861.6,925.9 L1886.9,926.9 L1912.2,927.5 L1937.5,927.4 L1962.8,929.3 L1988.1,929.3 L2013.4,928.2 L2038.7,929.1 L2064.0,928.6 L2089.3,929.5 L2114.6,927.9 L2139.9,928.1 L2165.2,927.4 L2190.5,928.0 L2215.8,928.0 L2241.1,928.2 L2266.4,929.2 L2291.7,929.5 L2317.0,928.5 L2342.3,929.5 L2367.6,925.4 L2392.9,927.3 L2418.2,926.1 L2443.5,925.8 L2468.8,926.2 L2494.1,926.8 L2519.4,927.4 L2544.7,927.1 L2570.0,929.5 L2595.3,929.9 L2620.6,930.3 L2645.9,929.9 L2671.2,927.5 L2696.5,926.4 L2721.8,925.6 L2747.0,925.4 L2772.3,924.1 L2797.6,922.6 L2822.9,922.9 L2848.2,924.1 L2873.5,925.5 L2898.8,924.7 L2924.1,923.7 L2949.4,909.6 L2974.7,917.9 L3000.0,920.4 L3025.3,918.7 L3050.6,917.9 L3075.9,920.0 L3101.2,919.6 L3126.5,920.4 L3151.8,920.6 L3177.1,922.5 L3202.4,923.7 L3227.7,922.7 L3253.0,928.3" fill="none" stroke="#b4bdcd" stroke-width="1.1"/>
<line x1="192" y1="903" x2="192" y2="942.5" stroke="#a7b4cd" stroke-width="1.6"/>
<rect x="187.2" y="914.5" width="9.6" height="17.5" rx="1.5" fill="#a7b4cd"/>
<path d="M189.5 920.5h5M189.5 926h5" stroke="#fff" stroke-width="1.4"/>
<line x1="3254" y1="903" x2="3254" y2="942.5" stroke="#a7b4cd" stroke-width="1.6"/>
<rect x="3249.2" y="914.5" width="9.6" height="17.5" rx="1.5" fill="#a7b4cd"/>
<path d="M3251.5 920.5h5M3251.5 926h5" stroke="#fff" stroke-width="1.4"/>
<path d="M3294.0 346.5 L3299.8 352.5 L3296.5 352.5 L3296.5 356.0 L3291.5 356.0 L3291.5 352.5 L3288.2 352.5ZM3307.5 360.0 L3301.5 365.8 L3301.5 362.5 L3298.0 362.5 L3298.0 357.5 L3301.5 357.5 L3301.5 354.2ZM3294.0 373.5 L3288.2 367.5 L3291.5 367.5 L3291.5 364.0 L3296.5 364.0 L3296.5 367.5 L3299.8 367.5ZM3280.5 360.0 L3286.5 354.2 L3286.5 357.5 L3290.0 357.5 L3290.0 362.5 L3286.5 362.5 L3286.5 365.8Z" fill="#a6a6a6"/>
<g fill="#9a9a9a"><rect x="3313" y="352.5" width="22" height="2.4"/><rect x="3313" y="358.8" width="22" height="2.3"/><rect x="3313" y="365.2" width="22" height="2.4"/></g>
</svg>
<div class="rh" style="left:3331px;top:606px"></div>
</div>
<div class="panel" style="left:0px;top:965px;width:551px;height:750.3px;border-radius:0 4px 4px 0">
<div class="ptitle" style="top:8px;left:9.9px;letter-spacing:.45px">Council District Codes</div>
<div class="abs" style="left:-4px;top:56px;width:555px;height:694.3px;border:2px solid #bcc2c6;border-radius:0 0 4px 0"></div>
<div class="abs" style="left:0;top:58px;width:549px;height:64px;background:#f5f7f7"></div>
<div class="abs" style="left:24px;top:75.5px;font-weight:bold;font-size:24px;line-height:30px;color:#7b7b7b;white-space:nowrap;letter-spacing:.15px">Council District ...</div>
<svg width="551" height="749" viewBox="0 0 551 749"><path d="M261.3 101.5v-19.5M254.8 88.6l6.500 -6.600l6.500 6.600" fill="none" stroke="#7b7b7b" stroke-width="1.9"/></svg>
<div class="abs" style="left:300px;width:156.5px;top:75.5px;font-weight:bold;font-size:24px;line-height:30px;color:#7b7b7b;white-space:nowrap;text-align:right;letter-spacing:.1px">Calls</div>
<div class="abs" style="left:331px;top:74px;width:2px;height:32px;background:#dde0e3"></div>
<div class="abs" style="left:479px;top:74px;width:2px;height:32px;background:#dde0e3"></div>
<div class="abs" style="left:0;top:122px;width:481px;height:56px;background:#c1e4fb;">
<div class="abs" style="left:23px;top:12px;width:32px;height:32px;border:2.5px solid #3b8ee6;border-radius:6px;background:#fff"></div>
<svg width="481" height="56" viewBox="0 0 481 56"><path d="M30.5 29l6 6.200l11.500 -13" fill="none" stroke="#3b8ee6" stroke-width="2.2"/></svg>
<div class="abs" style="left:79.5px;top:15px;font-size:24.2px;line-height:30px;color:#111;white-space:nowrap;letter-spacing:.55px">3</div>
<div class="abs" style="left:250px;width:207.2px;top:15px;text-align:right;font-size:24.2px;line-height:30px;color:#111;white-space:nowrap;letter-spacing:.55px">189,944</div>
</div>
<div class="abs" style="left:0;top:178px;width:481px;height:56px;background:#c1e4fb;">
<div class="abs" style="left:23px;top:12px;width:32px;height:32px;border:2.5px solid #3b8ee6;border-radius:6px;background:#fff"></div>
<svg width="481" height="56" viewBox="0 0 481 56"><path d="M30.5 29l6 6.200l11.500 -13" fill="none" stroke="#3b8ee6" stroke-width="2.2"/></svg>
<div class="abs" style="left:79.5px;top:15px;font-size:24.2px;line-height:30px;color:#111;white-space:nowrap;letter-spacing:.55px">4</div>
<div class="abs" style="left:250px;width:207.2px;top:15px;text-align:right;font-size:24.2px;line-height:30px;color:#111;white-space:nowrap;letter-spacing:.55px">148,937</div>
</div>
<div class="abs" style="left:0;top:234px;width:481px;height:56px;background:#c1e4fb;">
<div class="abs" style="left:23px;top:12px;width:32px;height:32px;border:2.5px solid #3b8ee6;border-radius:6px;background:#fff"></div>
<svg width="481" height="56" viewBox="0 0 481 56"><path d="M30.5 29l6 6.200l11.500 -13" fill="none" stroke="#3b8ee6" stroke-width="2.2"/></svg>
<div class="abs" style="left:79.5px;top:15px;font-size:24.2px;line-height:30px;color:#111;white-space:nowrap;letter-spacing:.55px">5</div>
<div class="abs" style="left:250px;width:207.2px;top:15px;text-align:right;font-size:24.2px;line-height:30px;color:#111;white-space:nowrap;letter-spacing:.55px">164,742</div>
</div>
<div class="abs" style="left:0;top:291.7px;width:481px;height:56px;background:#fcfcfd;border-bottom:1.7px solid #d5d8db;">
<div class="abs" style="left:23px;top:12px;width:32px;height:32px;border:2.5px solid #7f8c8d;border-radius:6px;background:#fff"></div>
<div class="abs" style="left:79.5px;top:15px;font-size:24.2px;line-height:30px;color:#8b8b8b;white-space:nowrap;letter-spacing:.55px">0</div>
<div class="abs" style="left:250px;width:207.2px;top:15px;text-align:right;font-size:24.2px;line-height:30px;color:#8b8b8b;white-space:nowrap;letter-spacing:.55px">0</div>
</div>
<div class="abs" style="left:0;top:347.7px;width:481px;height:56px;background:#ffffff;border-bottom:1.7px solid #d5d8db;">
<div class="abs" style="left:23px;top:12px;width:32px;height:32px;border:2.5px solid #7f8c8d;border-radius:6px;background:#fff"></div>
<div class="abs" style="left:79.5px;top:15px;font-size:24.2px;line-height:30px;color:#8b8b8b;white-space:nowrap;letter-spacing:.55px">1</div>
<div class="abs" style="left:250px;width:207.2px;top:15px;text-align:right;font-size:24.2px;line-height:30px;color:#8b8b8b;white-space:nowrap;letter-spacing:.55px">0</div>
</div>
<div class="abs" style="left:0;top:403.7px;width:481px;height:56px;background:#fcfcfd;border-bottom:1.7px solid #d5d8db;">
<div class="abs" style="left:23px;top:12px;width:32px;height:32px;border:2.5px solid #7f8c8d;border-radius:6px;background:#fff"></div>
<div class="abs" style="left:79.5px;top:15px;font-size:24.2px;line-height:30px;color:#8b8b8b;white-space:nowrap;letter-spacing:.55px">2</div>
<div class="abs" style="left:250px;width:207.2px;top:15px;text-align:right;font-size:24.2px;line-height:30px;color:#8b8b8b;white-space:nowrap;letter-spacing:.55px">0</div>
</div>
<div class="abs" style="left:0;top:459.7px;width:481px;height:56px;background:#ffffff;border-bottom:1.7px solid #d5d8db;">
<div class="abs" style="left:23px;top:12px;width:32px;height:32px;border:2.5px solid #7f8c8d;border-radius:6px;background:#fff"></div>
<div class="abs" style="left:79.5px;top:15px;font-size:24.2px;line-height:30px;color:#8b8b8b;white-space:nowrap;letter-spacing:.55px">6</div>
<div class="abs" style="left:250px;width:207.2px;top:15px;text-align:right;font-size:24.2px;line-height:30px;color:#8b8b8b;white-space:nowrap;letter-spacing:.55px">0</div>
</div>
<div class="abs" style="left:0;top:515.7px;width:481px;height:56px;background:#fcfcfd;border-bottom:1.7px solid #d5d8db;">
<div class="abs" style="left:23px;top:12px;width:32px;height:32px;border:2.5px solid #7f8c8d;border-radius:6px;background:#fff"></div>
<div class="abs" style="left:79.5px;top:15px;font-size:24.2px;line-height:30px;color:#8b8b8b;white-space:nowrap;letter-spacing:.55px">7</div>
<div class="abs" style="left:250px;width:207.2px;top:15px;text-align:right;font-size:24.2px;line-height:30px;color:#8b8b8b;white-space:nowrap;letter-spacing:.55px">0</div>
</div>
<div class="abs" style="left:0;top:571.7px;width:481px;height:56px;background:#ffffff;border-bottom:1.7px solid #d5d8db;">
<div class="abs" style="left:23px;top:12px;width:32px;height:32px;border:2.5px solid #7f8c8d;border-radius:6px;background:#fff"></div>
<div class="abs" style="left:79.5px;top:15px;font-size:24.2px;line-height:30px;color:#8b8b8b;white-space:nowrap;letter-spacing:.55px">8</div>
<div class="abs" style="left:250px;width:207.2px;top:15px;text-align:right;font-size:24.2px;line-height:30px;color:#8b8b8b;white-space:nowrap;letter-spacing:.55px">0</div>
</div>
<div class="abs" style="left:0;top:627.7px;width:481px;height:54px;background:#fcfcfd;border-bottom:1.7px solid #d5d8db;">
<div class="abs" style="left:23px;top:12px;width:32px;height:32px;border:2.5px solid #7f8c8d;border-radius:6px;background:#fff"></div>
<div class="abs" style="left:79.5px;top:15px;font-size:24.2px;line-height:30px;color:#8b8b8b;white-space:nowrap;letter-spacing:.55px">9</div>
<div class="abs" style="left:250px;width:207.2px;top:15px;text-align:right;font-size:24.2px;line-height:30px;color:#8b8b8b;white-space:nowrap;letter-spacing:.55px">0</div>
</div>
<div class="abs" style="left:0;top:290px;width:481px;height:1.7px;background:#d8d9da"></div>
<div class="rh" style="left:533px;top:732px"></div>
</div>
<div class="panel" style="left:557px;top:965px;width:1394px;height:750.3px">
<div class="ptitle" style="top:8px;left:14.4px;letter-spacing:.24px">Top Street Names</div>
<svg width="1394" height="750.3" viewBox="557 965 1394 750.3"><g transform="translate(0,0.9)">
<line x1="853.7" y1="1621.7" x2="853.7" y2="1630.7" stroke="#000" stroke-width="2"/>
<text x="853.7" y="1651.5" font-size="24" text-anchor="middle" fill="#000" stroke="#000" stroke-width=".3">0</text>
<line x1="1031.8" y1="1141.0" x2="1031.8" y2="1621.7" stroke="#cfcfcf" stroke-width="2"/>
<line x1="1031.8" y1="1621.7" x2="1031.8" y2="1630.7" stroke="#000" stroke-width="2"/>
<text x="1031.8" y="1651.5" font-size="24" text-anchor="middle" fill="#000" stroke="#000" stroke-width=".3">2k</text>
<line x1="1209.8" y1="1141.0" x2="1209.8" y2="1621.7" stroke="#cfcfcf" stroke-width="2"/>
<line x1="1209.8" y1="1621.7" x2="1209.8" y2="1630.7" stroke="#000" stroke-width="2"/>
<text x="1209.8" y="1651.5" font-size="24" text-anchor="middle" fill="#000" stroke="#000" stroke-width=".3">4k</text>
<line x1="1387.8" y1="1141.0" x2="1387.8" y2="1621.7" stroke="#cfcfcf" stroke-width="2"/>
<line x1="1387.8" y1="1621.7" x2="1387.8" y2="1630.7" stroke="#000" stroke-width="2"/>
<text x="1387.8" y="1651.5" font-size="24" text-anchor="middle" fill="#000" stroke="#000" stroke-width=".3">6k</text>
<line x1="1565.9" y1="1141.0" x2="1565.9" y2="1621.7" stroke="#cfcfcf" stroke-width="2"/>
<line x1="1565.9" y1="1621.7" x2="1565.9" y2="1630.7" stroke="#000" stroke-width="2"/>
<text x="1565.9" y="1651.5" font-size="24" text-anchor="middle" fill="#000" stroke="#000" stroke-width=".3">8k</text>
<line x1="1743.9" y1="1141.0" x2="1743.9" y2="1621.7" stroke="#cfcfcf" stroke-width="2"/>
<line x1="1743.9" y1="1621.7" x2="1743.9" y2="1630.7" stroke="#000" stroke-width="2"/>
<text x="1743.9" y="1651.5" font-size="24" text-anchor="middle" fill="#000" stroke="#000" stroke-width=".3">10k</text>
<line x1="1922.0" y1="1141.0" x2="1922.0" y2="1621.7" stroke="#cfcfcf" stroke-width="2"/>
<line x1="1922.0" y1="1621.7" x2="1922.0" y2="1630.7" stroke="#000" stroke-width="2"/>
<text x="1922.0" y="1651.5" font-size="24" text-anchor="middle" fill="#000" stroke="#000" stroke-width=".3">12k</text>
<line x1="853.7" y1="1141.0" x2="1922.0" y2="1141.0" stroke="#cfcfcf" stroke-width="2"/>
<line x1="844.7" y1="1141.0" x2="853.7" y2="1141.0" stroke="#000" stroke-width="2"/>
<line x1="853.7" y1="1189.1" x2="1922.0" y2="1189.1" stroke="#cfcfcf" stroke-width="2"/>
<line x1="844.7" y1="1189.1" x2="853.7" y2="1189.1" stroke="#000" stroke-width="2"/>
<line x1="853.7" y1="1237.1" x2="1922.0" y2="1237.1" stroke="#cfcfcf" stroke-width="2"/>
<line x1="844.7" y1="1237.1" x2="853.7" y2="1237.1" stroke="#000" stroke-width="2"/>
<line x1="853.7" y1="1285.2" x2="1922.0" y2="1285.2" stroke="#cfcfcf" stroke-width="2"/>
<line x1="844.7" y1="1285.2" x2="853.7" y2="1285.2" stroke="#000" stroke-width="2"/>
<line x1="853.7" y1="1333.3" x2="1922.0" y2="1333.3" stroke="#cfcfcf" stroke-width="2"/>
<line x1="844.7" y1="1333.3" x2="853.7" y2="1333.3" stroke="#000" stroke-width="2"/>
<line x1="853.7" y1="1381.3" x2="1922.0" y2="1381.3" stroke="#cfcfcf" stroke-width="2"/>
<line x1="844.7" y1="1381.3" x2="853.7" y2="1381.3" stroke="#000" stroke-width="2"/>
<line x1="853.7" y1="1429.4" x2="1922.0" y2="1429.4" stroke="#cfcfcf" stroke-width="2"/>
<line x1="844.7" y1="1429.4" x2="853.7" y2="1429.4" stroke="#000" stroke-width="2"/>
<line x1="853.7" y1="1477.5" x2="1922.0" y2="1477.5" stroke="#cfcfcf" stroke-width="2"/>
<line x1="844.7" y1="1477.5" x2="853.7" y2="1477.5" stroke="#000" stroke-width="2"/>
<line x1="853.7" y1="1525.6" x2="1922.0" y2="1525.6" stroke="#cfcfcf" stroke-width="2"/>
<line x1="844.7" y1="1525.6" x2="853.7" y2="1525.6" stroke="#000" stroke-width="2"/>
<line x1="853.7" y1="1573.6" x2="1922.0" y2="1573.6" stroke="#cfcfcf" stroke-width="2"/>
<line x1="844.7" y1="1573.6" x2="853.7" y2="1573.6" stroke="#000" stroke-width="2"/>
<line x1="844.7" y1="1621.7" x2="853.7" y2="1621.7" stroke="#000" stroke-width="2"/>
<rect x="853.7" y="1145.2" width="1014.0" height="38.5" fill="#6d247b"/>
<text x="837.7" y="1172.6" font-size="24" text-anchor="end" fill="#000" stroke="#000" stroke-width=".3">LAMAR</text>
<rect x="853.7" y="1193.3" width="478.3" height="38.5" fill="#402880"/>
<text x="837.7" y="1220.7" font-size="24" text-anchor="end" fill="#000" stroke="#000" stroke-width=".3">RIVERSIDE</text>
<rect x="853.7" y="1241.3" width="459.1" height="38.5" fill="#4558a5"/>
<text x="837.7" y="1268.8" font-size="24" text-anchor="end" fill="#000" stroke="#000" stroke-width=".3">IH 35 SVRD</text>
<rect x="853.7" y="1289.4" width="377.3" height="38.5" fill="#5586bf"/>
<text x="837.7" y="1316.8" font-size="24" text-anchor="end" fill="#000" stroke="#000" stroke-width=".3">SLAUGHTER</text>
<rect x="853.7" y="1337.5" width="375.6" height="38.5" fill="#6ba3ab"/>
<text x="837.7" y="1364.9" font-size="24" text-anchor="end" fill="#000" stroke="#000" stroke-width=".3">6TH</text>
<rect x="853.7" y="1385.5" width="366.2" height="38.5" fill="#82b384"/>
<text x="837.7" y="1413.0" font-size="24" text-anchor="end" fill="#000" stroke="#000" stroke-width=".3">RUNDBERG</text>
<rect x="853.7" y="1433.6" width="363.2" height="38.5" fill="#9dbd6a"/>
<text x="837.7" y="1461.1" font-size="24" text-anchor="end" fill="#000" stroke="#000" stroke-width=".3">CONGRESS</text>
<rect x="853.7" y="1481.7" width="351.0" height="38.5" fill="#b9bf5e"/>
<text x="837.7" y="1509.1" font-size="24" text-anchor="end" fill="#000" stroke="#000" stroke-width=".3">1ST</text>
<rect x="853.7" y="1529.8" width="323.6" height="38.5" fill="#d0b254"/>
<text x="837.7" y="1557.2" font-size="24" text-anchor="end" fill="#000" stroke="#000" stroke-width=".3">CESAR CHAVEZ</text>
<rect x="853.7" y="1577.8" width="315.4" height="38.5" fill="#db954b"/>
<text x="837.7" y="1605.3" font-size="24" text-anchor="end" fill="#000" stroke="#000" stroke-width=".3">PLEASANT VALLEY</text>
<line x1="853.7" y1="1140.0" x2="853.7" y2="1630.7" stroke="#000" stroke-width="2"/>
<line x1="853.7" y1="1621.7" x2="1923.0" y2="1621.7" stroke="#cfcfcf" stroke-width="2"/>
<line x1="844.7" y1="1621.7" x2="854.7" y2="1621.7" stroke="#000" stroke-width="2"/>
<text x="853.7" y="1096" font-size="24" font-weight="bold" text-anchor="middle" fill="#000">Street</text>
<text x="1387.6" y="1690.5" font-size="24" font-weight="bold" text-anchor="middle" fill="#000">Calls</text>
</g></svg>
<div class="rh" style="left:1376px;top:732px"></div>
</div>
<div class="panel" style="left:1955px;top:965px;width:1394px;height:750.3px">
<div class="ptitle" style="top:8px;left:14.1px;letter-spacing:.43px">Top Complaints</div>
<svg width="1394" height="750.3" viewBox="1955 965 1394 750.3">
<text x="2418.0" y="1077.3" font-size="19.87" fill="#96bc6a" stroke="#96bc6a" stroke-width=".3">Street Lights New</text>
<text x="2446.1" y="1115.3" font-size="20.00" fill="#3e2a82" stroke="#3e2a82" stroke-width=".3">Bat Complaint</text>
<text x="2437.5" y="1144.9" font-size="20.00" fill="#7bb07e" stroke="#7bb07e" stroke-width=".3">Guardrail Repair</text>
<text x="2439.3" y="1191.0" font-size="21.94" fill="#6d247b" stroke="#6d247b" stroke-width=".3">311 CC - Other</text>
<text x="2236.1" y="1204.5" font-size="21.88" fill="#7bb07e" stroke="#7bb07e" stroke-width=".3">Animal Bite</text>
<text x="2203.2" y="1234.7" font-size="28.06" fill="#b5ba58" stroke="#b5ba58" stroke-width=".3">Park Maintenance - Grounds</text>
<text x="2268.3" y="1273.0" font-size="23.93" fill="#96bc6a" stroke="#96bc6a" stroke-width=".3">ACD - Request Code Officer</text>
<text x="2276.8" y="1308.7" font-size="21.99" fill="#96bc6a" stroke="#96bc6a" stroke-width=".3">Parking Violation Enforcement</text>
<text x="2325.5" y="1349.3" font-size="36.16" fill="#3e2a82" stroke="#3e2a82" stroke-width=".3">Loose Dog</text>
<text x="2271.5" y="1374.4" font-size="21.88" fill="#d2ae52" stroke="#d2ae52" stroke-width=".3">Obstruction in ROW</text>
<text x="2594.0" y="1242.8" font-size="24.03" fill="#d2ae52" stroke="#d2ae52" stroke-width=".3">Debris in Street</text>
<text x="2123.6" y="1416.8" font-size="36.09" fill="#3f57a5" stroke="#3f57a5" stroke-width=".3">Traffic Signal - Maintenance</text>
<text x="2289.3" y="1448.4" font-size="24.09" fill="#d9613a" stroke="#d9613a" stroke-width=".3">Loud Commercial Music</text>
<text x="2278.1" y="1471.3" font-size="19.99" fill="#d9613a" stroke="#d9613a" stroke-width=".3">Animal Protection - Loose Dog</text>
<text x="2235.2" y="1499.3" font-size="19.96" fill="#c9302c" stroke="#c9302c" stroke-width=".3">Channels/Creeks/Drainage Easement</text>
<text x="2194.7" y="1523.1" font-size="19.96" fill="#6d247b" stroke="#6d247b" stroke-width=".3">Sign - Traffic Sign Emergency</text>
<text x="2210.6" y="1558.8" font-size="19.96" fill="#4d7fc0" stroke="#4d7fc0" stroke-width=".3">WPD - Channels/Creek/Drainage Issues</text>
<text x="2237.7" y="1592.9" font-size="20.04" fill="#b5ba58" stroke="#b5ba58" stroke-width=".3">Creek &amp; Pond Vegetation Control</text>
<text x="2226.7" y="1621.2" font-size="20.06" fill="#db954b" stroke="#db954b" stroke-width=".3">Dangerous/Vicious Dog Investigation</text>
<text x="2158.2" y="1643.2" font-size="20.02" fill="#c9302c" stroke="#c9302c" stroke-width=".3">Pet Resource Center - Assistance Request</text>
<text x="2217.1" y="1676.8" font-size="21.97" fill="#7bb07e" stroke="#7bb07e" stroke-width=".3">Austin Code - Short Term Rental Complaint SR</text>
<text x="2678.6" y="1041.0" font-size="19.97" fill="#7bb07e" stroke="#7bb07e" stroke-width=".3">ARR Street Sweeping</text>
<text x="2907.4" y="1041.0" font-size="19.95" fill="#96bc6a" stroke="#96bc6a" stroke-width=".3">View Obstruction at Intersection</text>
<text x="2855.3" y="1075.1" font-size="19.99" fill="#5f9fa8" stroke="#5f9fa8" stroke-width=".3">Animal Protection - Injured/Sick Animal</text>
<text x="2915.2" y="1099.1" font-size="20.12" fill="#7bb07e" stroke="#7bb07e" stroke-width=".3">Mowing Medians</text>
<text x="2822.3" y="1121.2" font-size="19.94" fill="#3e2a82" stroke="#3e2a82" stroke-width=".3">Animal Services - Contact Request</text>
<text x="2834.8" y="1162.6" font-size="22.01" fill="#96bc6a" stroke="#96bc6a" stroke-width=".3">ARR - Dead Animal Collection</text>
<text x="2810.1" y="1190.5" font-size="22.06" fill="#c9302c" stroke="#c9302c" stroke-width=".3">Sign - Traffic Sign Maintenance</text>
<text x="2807.3" y="1228.8" font-size="22.06" fill="#db954b" stroke="#db954b" stroke-width=".3">Found Animal - Pick Up</text>
<text x="2821.7" y="1259.0" font-size="19.96" fill="#7bb07e" stroke="#7bb07e" stroke-width=".3">ATD - Traffic Sign Maintenance</text>
<text x="2809.1" y="1282.8" font-size="21.99" fill="#6d247b" stroke="#6d247b" stroke-width=".3">ARR - Recycling</text>
<text x="2988.9" y="1291.2" font-size="19.95" fill="#3f57a5" stroke="#3f57a5" stroke-width=".3">Animal In Vehicle</text>
<text x="2644.2" y="1294.8" font-size="19.78" fill="#4d7fc0" stroke="#4d7fc0" stroke-width=".3">ARR - Bulk</text>
<text x="2646.2" y="1324.7" font-size="29.95" fill="#4d7fc0" stroke="#4d7fc0" stroke-width=".3">Animal Control - Assistance Request</text>
<text x="2698.7" y="1352.7" font-size="25.96" fill="#6d247b" stroke="#6d247b" stroke-width=".3">ARR - Storm Debris Collection</text>
<text x="2636.5" y="1379.1" font-size="20.02" fill="#d2ae52" stroke="#d2ae52" stroke-width=".3">ARR - General</text>
<text x="2842.2" y="1380.8" font-size="23.91" fill="#b5ba58" stroke="#b5ba58" stroke-width=".3">Tree Issue ROW</text>
<text x="2687.7" y="1405.1" font-size="22.10" fill="#3f57a5" stroke="#3f57a5" stroke-width=".3">Lane/Road Closure Notification</text>
<text x="2635.8" y="1430.8" font-size="23.77" fill="#5f9fa8" stroke="#5f9fa8" stroke-width=".3">ARR - Compost</text>
<text x="2634.9" y="1460.5" font-size="21.91" fill="#5f9fa8" stroke="#5f9fa8" stroke-width=".3">Water Waste Report</text>
<text x="2677.7" y="1484.8" font-size="19.91" fill="#d2ae52" stroke="#d2ae52" stroke-width=".3">Shared Micromobility</text>
<text x="2637.5" y="1510.5" font-size="22.06" fill="#b5ba58" stroke="#b5ba58" stroke-width=".3">Code Compliance</text>
<text x="2717.4" y="1538.7" font-size="21.80" fill="#3f57a5" stroke="#3f57a5" stroke-width=".3">ARR Brush and Bulk</text>
<text x="3019.1" y="1691.7" font-size="20.13" fill="#d9613a" stroke="#d9613a" stroke-width=".3">Bridge Repair</text>
<text transform="translate(2042.5,1044.6) rotate(90)" font-size="23.88" fill="#3f57a5" stroke="#3f57a5" stroke-width=".3">APD - Non Emergency Noise/Alarm</text>
<text transform="translate(2088.6,1048.3) rotate(90)" font-size="19.95" fill="#db954b" stroke="#db954b" stroke-width=".3">Coyote Complaints</text>
<text transform="translate(2128.5,1036.4) rotate(90)" font-size="21.95" fill="#5f9fa8" stroke="#5f9fa8" stroke-width=".3">Public Health - Graffiti Abatement</text>
<text transform="translate(2156.5,1044.2) rotate(90)" font-size="21.92" fill="#4d7fc0" stroke="#4d7fc0" stroke-width=".3">Traffic Signal - Dig Tess Request</text>
<text transform="translate(2188.6,1063.0) rotate(90)" font-size="19.87" fill="#96bc6a" stroke="#96bc6a" stroke-width=".3">Standing Water</text>
<text transform="translate(2276.7,1043.6) rotate(90)" font-size="19.98" fill="#b5ba58" stroke="#b5ba58" stroke-width=".3">Flooding - Past</text>
<text transform="translate(2368.6,1035.2) rotate(90)" font-size="26.00" fill="#3e2a82" stroke="#3e2a82" stroke-width=".3">Pothole Repair</text>
<text transform="translate(2402.5,1097.8) rotate(90)" font-size="21.57" fill="#4d7fc0" stroke="#4d7fc0" stroke-width=".3">Sign - New</text>
<text transform="translate(2600.0,1035.7) rotate(90)" font-size="21.92" fill="#3e2a82" stroke="#3e2a82" stroke-width=".3">Graffiti Abatement</text>
<text transform="translate(2634.4,1045.1) rotate(90)" font-size="18.89" fill="#6d247b" stroke="#6d247b" stroke-width=".3">Dockless Mobility</text>
<text transform="translate(2007.0,1243.6) rotate(90)" font-size="23.96" fill="#4d7fc0" stroke="#4d7fc0" stroke-width=".3">APD - Vehicle Abatement Report</text>
<text transform="translate(2080.7,1260.4) rotate(90)" font-size="25.95" fill="#c9302c" stroke="#c9302c" stroke-width=".3">ATD - Parking Violation Enforcement</text>
<text transform="translate(2595.0,1262.6) rotate(90)" font-size="30.02" fill="#7bb07e" stroke="#7bb07e" stroke-width=".3">ARR Dead Animal Collection</text>
<text transform="translate(2043.8,1456.6) rotate(90)" font-size="20.10" fill="#b5ba58" stroke="#b5ba58" stroke-width=".3">Loose Animal Not Dog</text>
<text transform="translate(2129.9,1430.2) rotate(90)" font-size="20.00" fill="#3e2a82" stroke="#3e2a82" stroke-width=".3">Sign - Street Name</text>
<text transform="translate(2160.4,1448.2) rotate(90)" font-size="20.13" fill="#3f57a5" stroke="#3f57a5" stroke-width=".3">Pavement Failure</text>
<text transform="translate(2647.8,1521.5) rotate(90)" font-size="19.98" fill="#d9613a" stroke="#d9613a" stroke-width=".3">Bicycle Issues</text>
<text transform="translate(2672.1,1523.2) rotate(90)" font-size="20.08" fill="#d9613a" stroke="#d9613a" stroke-width=".3">Loud Music</text>
<text transform="translate(2681.1,1062.4) rotate(90)" font-size="19.88" fill="#db954b" stroke="#db954b" stroke-width=".3">Wildlife Exposure</text>
<text transform="translate(2714.9,1087.9) rotate(90)" font-size="19.87" fill="#6d247b" stroke="#6d247b" stroke-width=".3">ARR - Brush</text>
<text transform="translate(2743.4,1056.2) rotate(90)" font-size="21.80" fill="#b5ba58" stroke="#b5ba58" stroke-width=".3">Sidewalk Repair</text>
<text transform="translate(2775.0,1057.7) rotate(90)" font-size="23.84" fill="#db954b" stroke="#db954b" stroke-width=".3">Animal - Proper Care</text>
<text transform="translate(3161.4,1099.7) rotate(90)" font-size="29.90" fill="#5f9fa8" stroke="#5f9fa8" stroke-width=".3">ARR Missed Recycling</text>
<text transform="translate(3196.9,1205.2) rotate(90)" font-size="30.08" fill="#96bc6a" stroke="#96bc6a" stroke-width=".3">Injured / Sick Animal</text>
<text transform="translate(3241.0,1171.9) rotate(90)" font-size="27.84" fill="#d2ae52" stroke="#d2ae52" stroke-width=".3">Street Light Issue- Address</text>
<text transform="translate(3279.3,1104.4) rotate(90)" font-size="25.92" fill="#d9613a" stroke="#d9613a" stroke-width=".3">ARR Missed Yard Trimmings/Compost</text>
<text transform="translate(3315.1,1110.0) rotate(90)" font-size="23.96" fill="#7bb07e" stroke="#7bb07e" stroke-width=".3">APD - Non Emergency Collision</text>
<text transform="translate(3046.7,1374.6) rotate(90)" font-size="21.94" fill="#3e2a82" stroke="#3e2a82" stroke-width=".3">Found Animal Report - Keep</text>
<text transform="translate(3090.9,1359.6) rotate(90)" font-size="21.81" fill="#c9302c" stroke="#c9302c" stroke-width=".3">ATD - Shared Micromobility</text>
<text transform="translate(3131.2,1355.4) rotate(90)" font-size="19.86" fill="#d2ae52" stroke="#d2ae52" stroke-width=".3">AE Street Light Issue - Address</text>
<text transform="translate(2770.5,1549.4) rotate(90)" font-size="20.00" fill="#b5ba58" stroke="#b5ba58" stroke-width=".3">DSD - Follow-Up</text>
<text transform="translate(2841.8,1552.3) rotate(90)" font-size="20.05" fill="#c9302c" stroke="#c9302c" stroke-width=".3">Traffic Calming</text>
<text transform="translate(2954.5,1425.2) rotate(90)" font-size="25.77" fill="#db954b" stroke="#db954b" stroke-width=".3">ARR - Garbage</text>
<text transform="translate(2988.6,1440.9) rotate(90)" font-size="19.84" fill="#96bc6a" stroke="#96bc6a" stroke-width=".3">Austin Code - Coronavirus</text>
<text transform="translate(3012.6,1428.4) rotate(90)" font-size="19.83" fill="#4d7fc0" stroke="#4d7fc0" stroke-width=".3">Concerns in the ROW</text>
<text transform="translate(3170.3,1425.7) rotate(90)" font-size="20.04" fill="#c9302c" stroke="#c9302c" stroke-width=".3">Traffic Signal - New/Change</text>
<text transform="translate(3204.7,1502.1) rotate(90)" font-size="19.97" fill="#5f9fa8" stroke="#5f9fa8" stroke-width=".3">SBO - Debris in Street</text>
<text transform="translate(3309.0,1498.7) rotate(90)" font-size="20.04" fill="#5f9fa8" stroke="#5f9fa8" stroke-width=".3">SBO - Pothole Repair</text>
</svg>
<div class="rh" style="left:1376px;top:732px"></div>
</div>
<div class="abs" style="left:3279px;top:77px;width:76px;height:1644px;z-index:20;pointer-events:none;background:linear-gradient(to right,rgba(0,0,0,0) 0%,rgba(0,0,0,.035) 45%,rgba(0,0,0,.13) 100%)"></div>
<div class="abs" style="left:3354px;top:2px;width:1px;height:75px;background:#5a626d;z-index:21"></div>
<div class="abs" style="left:3355px;top:0;width:2px;height:1721px;background:#050505;z-index:22"></div>
<div class="abs" style="left:3357px;top:0;width:2px;height:1721px;background:#2e2f31;z-index:22"></div>
<svg class="abs" style="left:0;top:0;z-index:8" width="3359" height="80" viewBox="0 0 3359 80">
<g transform="translate(2681,11.2) scale(2)" fill="#959897"><path d="M10 18h4v-2h-4v2zM3 6v2h18V6H3zm3 7h12v-2H6v2z"/></g>
<g transform="translate(2749.5,11.2) scale(2)" fill="#959897"><path d="M18.99 11.5c.34 0 .67.03 1 .07L20 0 0 20h11.56c-.04-.33-.07-.66-.07-1 0-4.14 3.36-7.5 7.5-7.5zm3.71 7.99c.02-.16.04-.32.04-.49 0-.17-.01-.33-.04-.49l1.06-.83c.09-.08.12-.21.06-.32l-1-1.73c-.06-.11-.19-.15-.31-.11l-1.24.5c-.26-.2-.54-.37-.85-.49l-.19-1.32c-.01-.12-.12-.21-.24-.21h-2c-.12 0-.23.09-.25.21l-.19 1.32c-.3.13-.59.29-.85.49l-1.24-.5c-.11-.04-.24 0-.31.11l-1 1.73c-.06.11-.04.24.06.32l1.06.83c-.02.16-.03.32-.03.49 0 .17.01.33.03.49l-1.06.83c-.09.08-.12.21-.06.32l1 1.73c.06.11.19.15.31.11l1.24-.5c.26.2.54.37.85.49l.19 1.32c.02.12.12.21.25.21h2c.12 0 .23-.09.25-.21l.19-1.32c.3-.13.59-.29.84-.49l1.25.5c.11.04.24 0 .31-.11l1-1.73c.06-.11.03-.24-.06-.32l-1.07-.83zm-3.71 1.01c-.83 0-1.5-.67-1.5-1.5s.67-1.5 1.5-1.5 1.5.67 1.5 1.5-.67 1.5-1.5 1.5z"/></g>
<g transform="translate(2817,11.2) scale(2)" fill="#959897"><path d="M19 9h-4V3H9v6H5l7 7 7-7zM5 18v2h14v-2H5z"/></g>
<g transform="translate(2885,11.2) scale(2)" fill="#959897"><path d="M9 16h6v-6h4l-7-7-7 7h4zm-4 2h14v2H5z"/></g>
<g transform="translate(3025,11.2) scale(2)" fill="#959897"><path d="M12 2C6.48 2 2 6.48 2 12s4.48 10 10 10 10-4.48 10-10S17.52 2 12 2zm-1 17.93c-3.95-.49-7-3.85-7-7.93 0-.62.08-1.21.21-1.79L9 15v1c0 1.1.9 2 2 2v1.93zm6.9-2.54c-.26-.81-1-1.39-1.9-1.39h-1v-3c0-.55-.45-1-1-1H8v-2h2c.55 0 1-.45 1-1V7h2c1.1 0 2-.9 2-2v-.41c2.93 1.19 5 4.06 5 7.41 0 2.08-.8 3.97-2.1 5.39z"/></g>
<g transform="translate(3093,11.2) scale(2)" fill="#959897"><path d="M15 15H3v2h12v-2zm0-8H3v2h12V7zM3 13h18v-2H3v2zm0 8h18v-2H3v2zM3 3v2h18V3H3z"/></g>
<g transform="translate(3161,11.2) scale(2)" fill="#959897"><path d="M3 3h2v2h-2zM7 3h2v2h-2zM11 3h2v2h-2zM15 3h2v2h-2zM19 3h2v2h-2zM3 7h2v2h-2zM11 7h2v2h-2zM19 7h2v2h-2zM3 11h2v2h-2zM7 11h2v2h-2zM11 11h2v2h-2zM15 11h2v2h-2zM19 11h2v2h-2zM3 15h2v2h-2zM11 15h2v2h-2zM19 15h2v2h-2zM3 19h2v2h-2zM7 19h2v2h-2zM11 19h2v2h-2zM15 19h2v2h-2zM19 19h2v2h-2z"/></g>
<g transform="translate(3229,11.2) scale(2)" fill="#959897"><path d="M12 17c1.1 0 2-.9 2-2s-.9-2-2-2-2 .9-2 2 .9 2 2 2zm6-9h-1V6c0-2.76-2.24-5-5-5S7 3.24 7 6h1.9c0-1.71 1.39-3.1 3.1-3.1 1.71 0 3.1 1.39 3.1 3.1v2H6c-1.1 0-2 .9-2 2v10c0 1.1.9 2 2 2h12c1.1 0 2-.9 2-2V10c0-1.1-.9-2-2-2zm0 12H6V10h12v10z"/></g>
<g transform="translate(3297,11.2) scale(2)" fill="#959897"><path d="M12 2C6.48 2 2 6.48 2 12s4.48 10 10 10 10-4.48 10-10S17.52 2 12 2zm1 17h-2v-2h2v2zm2.07-7.750l-.9.92C13.45 12.9 13 13.5 13 15h-2v-.5c0-1.1.45-2.1 1.17-2.83l1.24-1.26c.37-.36.59-.86.59-1.41 0-1.1-.9-2-2-2s-2 .9-2 2H8c0-2.21 1.79-4 4-4s4 1.79 4 4c0 .88-.36 1.68-.93 2.250z"/></g>
<circle cx="2724" cy="20" r="15" fill="#5b9cec"/>
<text x="2724" y="27.3" font-size="21" font-weight="bold" text-anchor="middle" fill="#fff">1</text>
<circle cx="2979.1" cy="36.7" r="25.8" fill="#030303"/>
<path d="M2981.1,28.7 L2982.3,28.3 L2983.7,28.0 L2985.2,27.9 L2986.8,28.1 L2988.4,28.6 L2990.0,29.3" fill="none" stroke="#e8845e" stroke-width="2.5" stroke-linecap="round"/>
<path d="M2992.1,30.1 L2993.4,30.9 L2994.7,31.9 L2995.9,33.1" fill="none" stroke="#eaa15f" stroke-width="2.1" stroke-linecap="round"/>
<path d="M2996.7,35.5 L2997.0,36.7 L2997.3,38.0 L2997.5,39.3" fill="none" stroke="#eeb056" stroke-width="1.9" stroke-linecap="round"/>
<path d="M2998.5,31.1 L2998.8,31.8" fill="none" stroke="#f1b94c" stroke-width="2.0" stroke-linecap="round"/>
<path d="M2997.7,43.5 L2997.4,44.8 L2996.9,46.2 L2996.4,47.5" fill="none" stroke="#f1b94c" stroke-width="1.9" stroke-linecap="round"/>
<path d="M2994.5,50.1 L2994.3,50.4" fill="none" stroke="#f1b94c" stroke-width="2.0" stroke-linecap="round"/>
<path d="M2987.0,34.4 L2988.0,35.3 L2989.0,36.4 L2989.8,37.6 L2990.4,39.1 L2990.8,40.7 L2991.0,42.5" fill="none" stroke="#e8845e" stroke-width="2.5" stroke-linecap="round"/>
<path d="M2991.3,44.7 L2991.3,46.2 L2991.0,47.8 L2990.6,49.5" fill="none" stroke="#eaa15f" stroke-width="2.1" stroke-linecap="round"/>
<path d="M2988.9,51.3 L2988.1,52.2 L2987.1,53.1 L2986.1,53.9" fill="none" stroke="#eeb056" stroke-width="1.9" stroke-linecap="round"/>
<path d="M2993.6,50.7 L2993.2,51.3" fill="none" stroke="#f1b94c" stroke-width="2.0" stroke-linecap="round"/>
<path d="M2982.5,56.2 L2981.2,56.6 L2979.8,56.9 L2978.4,57.1" fill="none" stroke="#f1b94c" stroke-width="1.9" stroke-linecap="round"/>
<path d="M2975.2,56.7 L2974.9,56.7" fill="none" stroke="#f1b94c" stroke-width="2.0" stroke-linecap="round"/>
<path d="M2985.0,42.4 L2984.8,43.7 L2984.3,45.1 L2983.6,46.4 L2982.7,47.7 L2981.5,48.8 L2980.0,49.9" fill="none" stroke="#e8845e" stroke-width="2.5" stroke-linecap="round"/>
<path d="M2978.3,51.3 L2976.9,52.0 L2975.4,52.6 L2973.8,53.1" fill="none" stroke="#eaa15f" stroke-width="2.1" stroke-linecap="round"/>
<path d="M2971.4,52.5 L2970.1,52.2 L2968.9,51.8 L2967.6,51.4" fill="none" stroke="#eeb056" stroke-width="1.9" stroke-linecap="round"/>
<path d="M2974.2,56.3 L2973.5,56.2" fill="none" stroke="#f1b94c" stroke-width="2.0" stroke-linecap="round"/>
<path d="M2963.9,49.4 L2962.9,48.5 L2962.0,47.4 L2961.1,46.3" fill="none" stroke="#f1b94c" stroke-width="1.9" stroke-linecap="round"/>
<path d="M2959.8,43.3 L2959.7,43.0" fill="none" stroke="#f1b94c" stroke-width="2.0" stroke-linecap="round"/>
<path d="M2977.1,44.7 L2975.9,45.1 L2974.5,45.4 L2973.0,45.5 L2971.4,45.3 L2969.8,44.8 L2968.2,44.1" fill="none" stroke="#e8845e" stroke-width="2.5" stroke-linecap="round"/>
<path d="M2966.1,43.3 L2964.8,42.5 L2963.5,41.5 L2962.3,40.3" fill="none" stroke="#eaa15f" stroke-width="2.1" stroke-linecap="round"/>
<path d="M2961.5,37.9 L2961.2,36.7 L2960.9,35.4 L2960.7,34.1" fill="none" stroke="#eeb056" stroke-width="1.9" stroke-linecap="round"/>
<path d="M2959.7,42.3 L2959.4,41.6" fill="none" stroke="#f1b94c" stroke-width="2.0" stroke-linecap="round"/>
<path d="M2960.5,29.9 L2960.8,28.6 L2961.3,27.2 L2961.8,25.9" fill="none" stroke="#f1b94c" stroke-width="1.9" stroke-linecap="round"/>
<path d="M2963.7,23.3 L2963.9,23.0" fill="none" stroke="#f1b94c" stroke-width="2.0" stroke-linecap="round"/>
<path d="M2971.2,39.0 L2970.2,38.1 L2969.2,37.0 L2968.4,35.8 L2967.8,34.3 L2967.4,32.7 L2967.2,30.9" fill="none" stroke="#e8845e" stroke-width="2.5" stroke-linecap="round"/>
<path d="M2966.9,28.7 L2966.9,27.2 L2967.2,25.6 L2967.6,23.9" fill="none" stroke="#eaa15f" stroke-width="2.1" stroke-linecap="round"/>
<path d="M2969.3,22.1 L2970.1,21.2 L2971.1,20.3 L2972.1,19.5" fill="none" stroke="#eeb056" stroke-width="1.9" stroke-linecap="round"/>
<path d="M2964.6,22.7 L2965.0,22.1" fill="none" stroke="#f1b94c" stroke-width="2.0" stroke-linecap="round"/>
<path d="M2975.7,17.2 L2977.0,16.8 L2978.4,16.5 L2979.8,16.3" fill="none" stroke="#f1b94c" stroke-width="1.9" stroke-linecap="round"/>
<path d="M2983.0,16.7 L2983.3,16.7" fill="none" stroke="#f1b94c" stroke-width="2.0" stroke-linecap="round"/>
<path d="M2973.2,31.0 L2973.4,29.7 L2973.9,28.3 L2974.6,27.0 L2975.5,25.7 L2976.7,24.6 L2978.2,23.5" fill="none" stroke="#e8845e" stroke-width="2.5" stroke-linecap="round"/>
<path d="M2979.9,22.1 L2981.3,21.4 L2982.8,20.8 L2984.4,20.3" fill="none" stroke="#eaa15f" stroke-width="2.1" stroke-linecap="round"/>
<path d="M2986.8,20.9 L2988.1,21.2 L2989.3,21.6 L2990.6,22.0" fill="none" stroke="#eeb056" stroke-width="1.9" stroke-linecap="round"/>
<path d="M2984.0,17.1 L2984.7,17.2" fill="none" stroke="#f1b94c" stroke-width="2.0" stroke-linecap="round"/>
<path d="M2994.3,24.0 L2995.3,24.9 L2996.2,26.0 L2997.1,27.1" fill="none" stroke="#f1b94c" stroke-width="1.9" stroke-linecap="round"/>
<path d="M2998.4,30.1 L2998.5,30.4" fill="none" stroke="#f1b94c" stroke-width="2.0" stroke-linecap="round"/>
<text x="2978.7999999999997" y="40.900000000000006" font-size="11.5" text-anchor="middle" fill="#fff" stroke="#fff" stroke-width=".3">AI</text>
<rect x="2953" y="51.2" width="54.2" height="23.8" rx="5.5" fill="#5b9cec"/>
<text x="2980.4" y="67.9" font-size="15.8" font-weight="bold" text-anchor="middle" fill="#fff">BETA</text>
</svg>
</div></body></html>
